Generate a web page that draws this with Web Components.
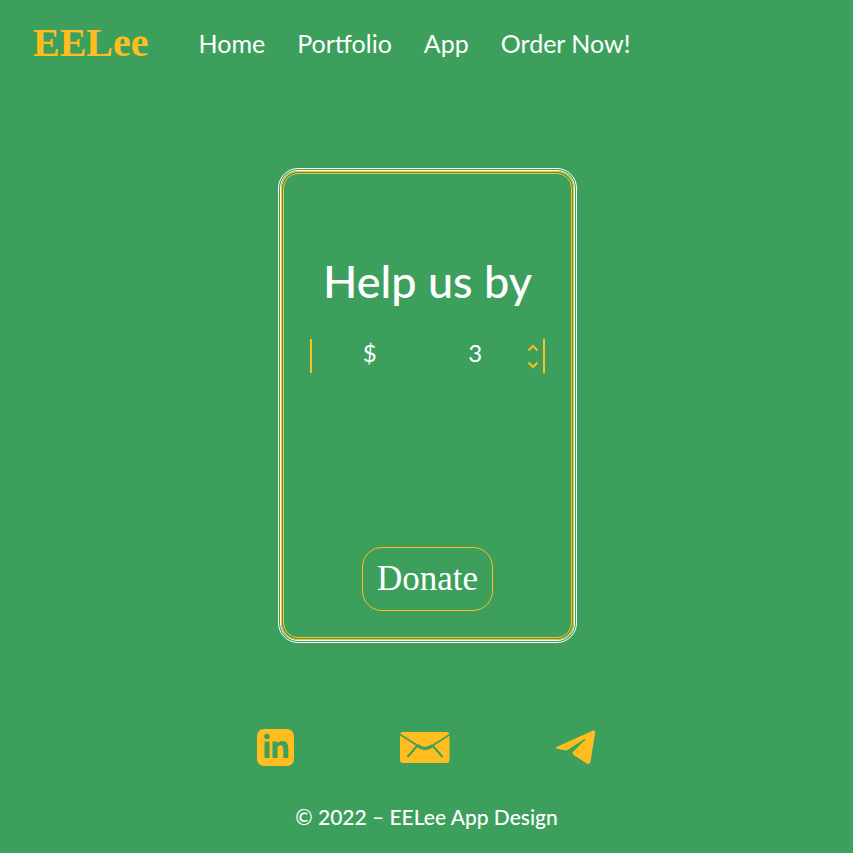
<!DOCTYPE html>
<html lang="en">
<head>
<meta charset="utf-8">
<meta name="viewport" content="width=device-width, initial-scale=1">
<title>EELee – Donate</title>
<style>
html{--leaf:#3ca05c;--gold:#ffbd1f;background:var(--leaf)}
body{margin:0;color:#fff;font-family:Lato,"Open Sans",sans-serif}
</style>
</head>
<body>
<eelee-page>
  <eelee-header slot="header">
    <eelee-link href="#home">Home</eelee-link>
    <eelee-link href="#portfolio">Portfolio</eelee-link>
    <eelee-link href="#app">App</eelee-link>
    <eelee-link href="#order">Order Now!</eelee-link>
  </eelee-header>
  <donate-card><span slot="title">Help us by</span><amount-field></amount-field><span slot="action">Donate</span></donate-card>
  <eelee-footer slot="footer">© 2022 – EELee App Design</eelee-footer>
</eelee-page>
<script>
const define = (name, html, setup) => customElements.define(name, class extends HTMLElement {
  constructor() {
    super();
    this.attachShadow({mode: 'open'}).innerHTML = html;
    if (setup) setup(this, this.shadowRoot);
  }
});

define('eelee-page', `
<style>
:host{display:flex;flex-direction:column;min-height:100vh;box-sizing:border-box}
main{flex:1;display:flex;justify-content:center;align-items:flex-start;padding:80px 0 80px 2px}
</style>
<slot name="header"></slot><main><slot></slot></main><slot name="footer"></slot>`);

define('eelee-header', `
<style>
:host{display:flex;align-items:flex-start;gap:50px;padding:20px 33px;height:48px}
.logo{color:var(--gold);font:bold 40px/46px "Liberation Serif",serif;text-decoration:none}
nav{display:flex;gap:32px}
</style>
<a class="logo" href="#">EELee</a><nav><slot></slot></nav>`);

define('eelee-link', `
<style>
:host{display:block}
a{color:inherit;text-decoration:none;font-size:25px;line-height:46px;white-space:nowrap}
</style>
<a><slot></slot></a>`, (host, root) => { root.querySelector('a').href = host.getAttribute('href'); });

define('amount-field', `
<style>
:host{display:grid;grid-template-columns:1fr 1fr;height:34px;border:solid var(--gold);border-width:0 2px;font-family:Lato,sans-serif;font-size:24px;line-height:28px;text-align:center}
.value{display:flex;min-width:0}
input{flex:1;height:28px;min-width:0;padding:0;border:0;background:none;color:inherit;font:inherit;text-align:center;appearance:textfield;-moz-appearance:textfield}
input::-webkit-inner-spin-button{appearance:none;-webkit-appearance:none;margin:0}
.steps{display:grid;width:20px}
button{display:grid;place-items:center;padding:0;border:0;background:none;color:var(--gold)}
svg{display:block;fill:none;stroke:currentColor;stroke-width:2}
</style>
<label for="amount">$</label>
<div class="value"><input id="amount" type="number" value="3" min="1">
<div class="steps">
<button type="button" aria-label="Increase"><svg width="12" height="8" viewBox="0 0 12 8"><path d="M1.500 6.500 6 2l4.500 4.500"/></svg></button>
<button type="button" aria-label="Decrease"><svg width="12" height="8" viewBox="0 0 12 8"><path d="M1.500 1.500 6 6l4.500-4.500"/></svg></button>
</div></div>`, (host, root) => {
  const input = root.querySelector('input');
  const [up, down] = root.querySelectorAll('button');
  up.onclick = () => input.stepUp();
  down.onclick = () => input.stepDown();
});

define('donate-card', `
<style>
:host{display:block;width:round(35vw,1px);min-width:270px;box-sizing:border-box;border:3px double #fff;border-radius:20px}
form{display:flex;flex-direction:column;padding:79px 26px 26px;border:3px double var(--gold);border-radius:17px}
h1{margin:0 0 30px;font-weight:500;font-size:45px;line-height:56px;text-align:center;white-space:nowrap}
button{align-self:center;margin-top:174px;height:64px;padding:0 14px;border:1px solid var(--gold);border-radius:20px;background:none;color:inherit;font:35px/60px "Liberation Serif",serif}
</style>
<form><h1><slot name="title"></slot></h1><slot></slot><button type="button"><slot name="action"></slot></button></form>`);

define('eelee-footer', `
<style>
:host{display:flex;flex-direction:column;align-items:center;padding-bottom:20px}
nav{display:flex;justify-content:space-between;align-items:center;width:40%;min-width:240px;height:42px;margin-bottom:33px}
a{color:var(--gold)}
svg{display:block;fill:currentColor}
p{margin:0;font-size:21px;font-weight:500;line-height:32px}
</style>
<nav>
<a href="#linkedin" aria-label="LinkedIn"><svg width="38" height="38" viewBox="0 0 38 38"><rect width="37" height="37" x="1" y="1" rx="7"/><g fill="#3ca05c"><circle cx="11" cy="8.500" r="2.800"/><path d="M8.500 13.500h5V30h-5zM16.500 13.500h4.800v2.300c1-1.700 2.800-2.700 5-2.700 4.300 0 6 2.800 6 7.300V30h-5v-8.700c0-2.600-.8-4-2.700-4-2.100 0-3.100 1.500-3.100 4V30h-5z"/></g></svg></a>
<a href="#mail" aria-label="E-mail"><svg width="50" height="32" viewBox="0 0 50 32"><rect y="1" width="49.500" height="31" rx="3"/><g fill="none" stroke="#3ca05c"><path stroke-width="1.700" d="M0 3.500 19 15.500q6 4 12 0L50 3.500"/><path stroke-width="2" d="M17 15 7.500 26M33 15l9.500 11"/><path stroke-width="3.500" d="M17.500 14.500q7.500 6 15 0"/></g></svg></a>
<a href="#telegram" aria-label="Telegram"><svg width="41" height="36" viewBox="0 0 41 36"><path d="M.5 18 36.500 1.700q3-1 2.700 2L34.500 32.500q-.7 3.500-3.800 2l-13-8.500q-2-1.500-.4-3.400L29.500 10.500q.6-1.300-1-.5L11.500 21q-1.300.7-2.800.2L1 19.700q-1.800-.6-.5-1.700z"/></svg></a>
</nav><p><slot></slot></p>`);
</script>
</body>
</html>
